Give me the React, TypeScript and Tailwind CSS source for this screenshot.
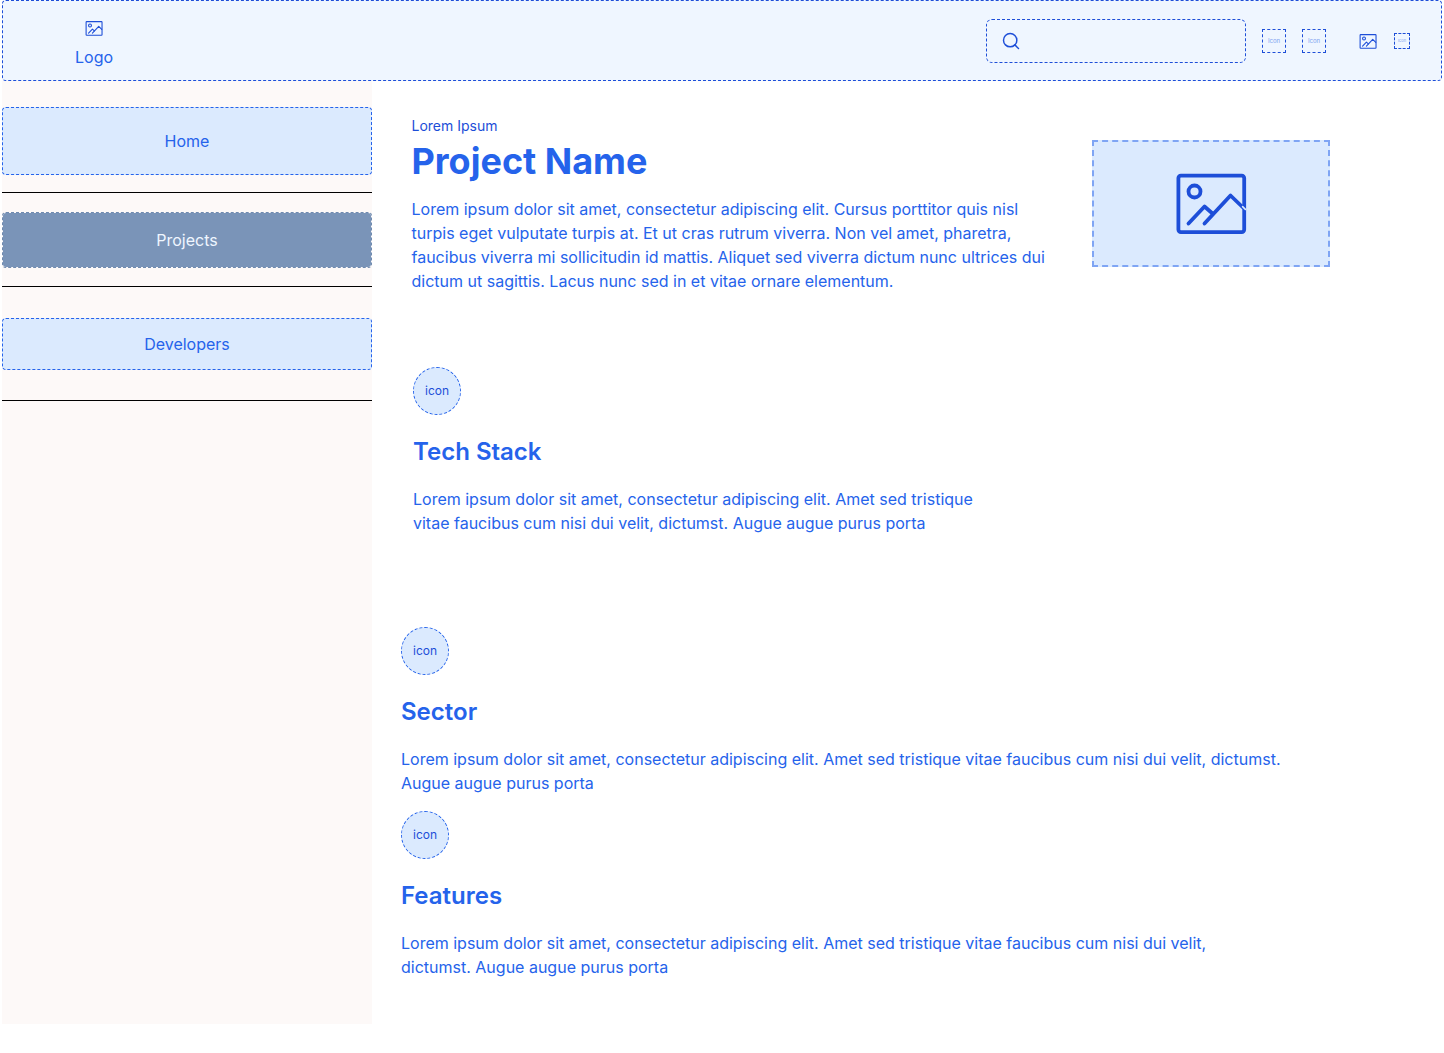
import React from "react";
import { Search } from "lucide-react";

const FONT = "font-['Inter',sans-serif]";

function ImageIcon({ className, stroke, notch }: { className: string; stroke: number; notch?: boolean }) {
  return (
    <svg viewBox="0 0 72 62" fill="none" className={className} stroke="#1d4ed8" strokeWidth={stroke} strokeLinecap="round" strokeLinejoin="round">
      <rect x="3.4" y="2.6" width="65.8" height="56.5" rx="2.5" />
      <circle cx="19.5" cy="18.5" r="6" />
      <path d="M13.5 50.5 L29.5 33.5 L37.5 40.5" />
      <path d="M29.5 50.5 L55.5 22.5 L68 34.5" />
      {notch ? <path d="M67.6 33.6 L70.4 36.4" stroke="#dbeafe" strokeWidth="1.6" /> : null}
    </svg>
  );
}

function TinyIcon({ className, text }: { className: string; text: string }) {
  return (
    <div className={`flex items-center justify-center border border-dashed border-[#1d4ed8] text-[#7ea2f0] leading-none ${className} ${text}`}>
      Icon
    </div>
  );
}

function Feature({ title, body, className, bodyClass }: { title: string; body: string; className: string; bodyClass: string }) {
  return (
    <section className={className}>
      <div className="flex h-12 w-12 items-center justify-center rounded-full border border-dashed border-[#2563eb] bg-[#dbeafe] text-xs text-[#1d4ed8]">
        icon
      </div>
      <h2 className="mt-[21px] text-2xl font-semibold text-[#2563eb]">{title}</h2>
      <p className={`mt-[19px] text-base leading-6 text-[#2563eb] ${bodyClass}`}>{body}</p>
    </section>
  );
}

export default function App() {
  return (
    <div className={`${FONT} min-h-[1053px] bg-white px-[2px] text-[#2563eb]`}>
      <header className="flex h-[81px] items-center rounded border border-dashed border-[#1d4ed8] bg-[#eff6ff]">
        <div className="ml-[72px] flex w-[38px] flex-col items-center pt-[9px]">
          <ImageIcon className="h-[15px] w-[18px]" stroke={4.5} />
          <span className="mt-[9px] text-base leading-6">Logo</span>
        </div>
        <div className="ml-auto flex h-11 w-[260px] items-center rounded-md border border-dashed border-[#1d4ed8] pl-[14px]">
          <Search className="h-5 w-5 text-[#1d4ed8]" strokeWidth={1.75} />
        </div>
        <TinyIcon className="ml-4 mt-px h-6 w-6" text="text-[6px]" />
        <TinyIcon className="ml-4 mt-px h-6 w-6" text="text-[6px]" />
        <ImageIcon className="ml-[33px] mt-[2px] h-[15px] w-[18px]" stroke={4.5} />
        <TinyIcon className="ml-[17px] h-4 w-4" text="text-[4px]" />
        <div className="w-[31px]" />
      </header>
      <div className="flex">
        <aside className="h-[943px] w-[370px] shrink-0 bg-[#fdf9f8] pt-[26px]">
          <a className="flex h-[68px] items-center justify-center rounded border border-dashed border-[#2563eb] bg-[#dbeafe] text-base">Home</a>
          <hr className="mt-[17px] border-black" />
          <a className="mt-[19px] flex h-14 items-center justify-center rounded border border-dashed border-[#6f8aaf] bg-[#7a94b8] bg-clip-padding text-base text-[#eff6ff]">Projects</a>
          <hr className="mt-[18px] border-black" />
          <a className="mt-[31px] flex h-[52px] items-center justify-center rounded border border-dashed border-[#2563eb] bg-[#dbeafe] text-base">Developers</a>
          <hr className="mt-[30px] border-black" />
        </aside>
        <main className="min-w-0 flex-1">
          <section className="ml-[39.5px] flex pt-[35px]">
            <div className="w-[640px] shrink-0">
              <p className="text-sm leading-5 text-[#1d4ed8]">Lorem Ipsum</p>
              <h1 className="mt-[5px] text-4xl font-bold leading-10 text-[#2563eb]">Project Name</h1>
              <p className="mt-4 text-base leading-6 text-[#2563eb]">
                Lorem ipsum dolor sit amet, consectetur adipiscing elit. Cursus porttitor quis nisl turpis eget vulputate turpis at. Et ut cras rutrum viverra. Non vel amet, pharetra, faucibus viverra mi sollicitudin id mattis. Aliquet sed viverra dictum nunc ultrices dui dictum ut sagittis. Lacus nunc sed in et vitae ornare elementum.
              </p>
            </div>
            <div className="ml-[40.5px] mt-6 flex h-[127px] w-[238px] shrink-0 items-center justify-center border-2 border-dashed border-[#2563eb]/50 bg-[#dbeafe]">
              <ImageIcon className="h-[62px] w-[72px]" stroke={3.8} notch />
            </div>
          </section>
          <Feature
            className="ml-[41px] mt-[74px]"
            bodyClass="w-[576px]"
            title="Tech Stack"
            body="Lorem ipsum dolor sit amet, consectetur adipiscing elit. Amet sed tristique vitae faucibus cum nisi dui velit, dictumst. Augue augue purus porta"
          />
          <Feature
            className="ml-[29px] mt-[92px]"
            bodyClass="w-[900px]"
            title="Sector"
            body="Lorem ipsum dolor sit amet, consectetur adipiscing elit. Amet sed tristique vitae faucibus cum nisi dui velit, dictumst. Augue augue purus porta"
          />
          <Feature
            className="ml-[29px] mt-[16px]"
            bodyClass="w-[850px]"
            title="Features"
            body="Lorem ipsum dolor sit amet, consectetur adipiscing elit. Amet sed tristique vitae faucibus cum nisi dui velit, dictumst. Augue augue purus porta"
          />
        </main>
      </div>
    </div>
  );
}
